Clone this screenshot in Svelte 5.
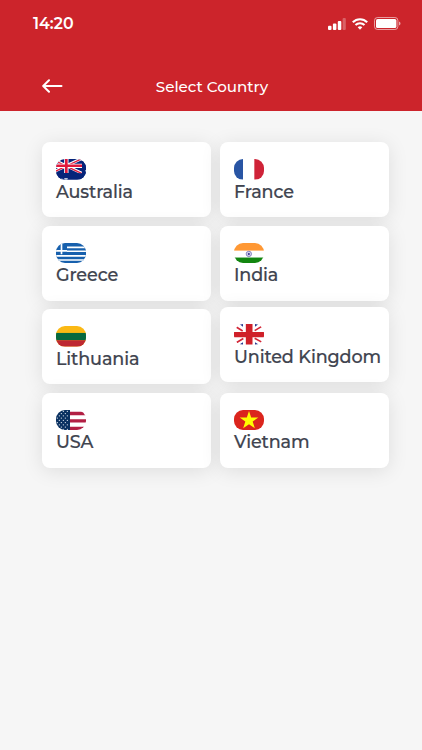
<script>
  const countries = [
    { code: 'au', name: 'Australia' },
    { code: 'fr', name: 'France' },
    { code: 'gr', name: 'Greece' },
    { code: 'in', name: 'India' },
    { code: 'lt', name: 'Lithuania' },
    { code: 'gb', name: 'United Kingdom' },
    { code: 'us', name: 'USA' },
    { code: 'vn', name: 'Vietnam' }
  ];

  const starRows = [0, 1, 2, 3, 4, 5, 6, 7, 8];
</script>

<main class="screen">
  <header>
    <div class="status-bar">
      <span class="time">14:20</span>
      <div class="status-icons">
        <svg width="18" height="12" viewBox="0 0 18 12" fill="#fff">
          <rect x="0" y="7.8" width="3.5" height="4.2" rx="1" />
          <rect x="4.9" y="5.6" width="3.5" height="6.4" rx="1" />
          <rect x="9.8" y="3" width="3.5" height="9" rx="1" />
          <rect x="14.6" y="0" width="3.2" height="12" rx="1" opacity="0.28" />
        </svg>
        <svg width="16" height="12" viewBox="0 0 16 12" fill="none" stroke="#fff" stroke-width="2.1">
          <path d="M.8 4.3C4.8.2 11.2.2 15.2 4.3" />
          <path d="M3.5 7.1c2.5-2.5 6.5-2.5 9 0" />
          <path d="M5.7 9.2c1.3-1.2 3.3-1.2 4.6 0L8 11.7z" fill="#fff" stroke="none" />
        </svg>
        <svg width="27" height="13" viewBox="0 0 27 13">
          <rect x=".5" y=".5" width="23.4" height="12" rx="3" fill="none" stroke="#fff" opacity="0.55" />
          <rect x="2" y="2" width="20.4" height="9" rx="1.6" fill="#fff" />
          <path d="M25 4.5c2 .8 2 3.2 0 4z" fill="#fff" opacity="0.6" />
        </svg>
      </div>
    </div>
    <div class="nav-bar">
      <button class="back" aria-label="Back">
        <svg width="21" height="14" viewBox="0 0 21 14" fill="none" stroke="#fff" stroke-width="2" stroke-linecap="round" stroke-linejoin="round">
          <path d="M7 1.2 1.2 7 7 12.8M1.5 7h18" />
        </svg>
      </button>
      <h1>Select Country</h1>
    </div>
  </header>

  <div class="countries">
    {#each countries as country (country.code)}
      <div class="card" class:raised={country.code === 'gb'}>
        <svg class="flag" viewBox="0 0 90 62" preserveAspectRatio="none">
          {#if country.code === 'au'}
            <rect width="90" height="62" fill="#06247a" />
            <path d="M-16-2 78 43M78-2-16 43" stroke="#fff" stroke-width="9" />
            <path d="M-16-1 78 44M78-1-16 44" stroke="#e0183c" stroke-width="4" />
            <path d="M31 0v42M0 20.5h78" stroke="#fff" stroke-width="13" />
            <path d="M31 0v42M0 20.5h78" stroke="#e0183c" stroke-width="8" />
            <path d="M78 0h12v62H0V43h78z" fill="#06247a" />
            <path d="m30 57 2 2 4-1-2 4h-8l-2-4 4 1zM16 59l3 1 3 2h-5zM87 35l3-1v5z" fill="#fff" />
          {:else if country.code === 'fr'}
            <rect width="90" height="62" fill="#fff" />
            <rect width="27" height="62" fill="#2955a4" />
            <rect x="61" width="29" height="62" fill="#cf2338" />
          {:else if country.code === 'gr'}
            <rect width="90" height="62" fill="#1760ad" />
            <path d="M33 13h57M33 25h57M0 39h90M0 51.5h90" stroke="#fff" stroke-width="5" />
            <path d="M16.5 0v34M0 24h33" stroke="#fff" stroke-width="5" />
          {:else if country.code === 'in'}
            <rect width="90" height="62" fill="#fff" />
            <rect width="90" height="23" fill="#ff9834" />
            <rect y="44" width="90" height="18" fill="#138610" />
            <circle cx="44.5" cy="33" r="8" fill="#e7e7f6" stroke="#5750a5" stroke-width="2" />
            <path d="M44.5 26v14M37.5 33h14M39.5 28l10 10M49.5 28l-10 10" stroke="#8984c3" />
            <circle cx="44.5" cy="33" r="3" fill="#38318f" />
          {:else if country.code === 'lt'}
            <rect width="90" height="62" fill="#fbb915" />
            <rect y="21" width="90" height="22" fill="#07693f" />
            <rect y="43" width="90" height="19" fill="#be2932" />
          {:else if country.code === 'gb'}
            <rect width="90" height="62" fill="#fff" />
            <path d="M16 0h11v8zM74 0H63v8zM16 62h11v-7zM74 62H63v-7z" fill="#293990" />
            <path d="m8 10 18 11M82 8 62 20M8 56l20-12M82 54 62 43" stroke="#d32636" stroke-width="5" />
            <path d="M45.5 0v62" stroke="#cf2029" stroke-width="20" />
            <path d="M0 32h90" stroke="#cf2029" stroke-width="16" />
          {:else if country.code === 'us'}
            <rect width="90" height="62" fill="#fff" />
            <path d="M41 10.5h49M41 33h49M41 56h49" stroke="#b21f44" stroke-width="10" />
            <rect width="42" height="62" fill="#0a3161" />
            {#each starRows as row}
              <g fill="#e7edf5">
                <circle cx={row % 2 ? 4 : 10} cy={4 + row * 6.8} r="1.9" />
                <circle cx={row % 2 ? 16 : 22} cy={4 + row * 6.8} r="1.9" />
                <circle cx={row % 2 ? 28 : 34} cy={4 + row * 6.8} r="1.9" />
              </g>
            {/each}
          {:else}
            <rect width="90" height="62" fill="#db251d" />
            <path d="m45 3 6.5 19.5H73L56 35l6.5 20L45 43 27.5 55 34 35 17 22.5h21.5z" fill="#ff0" />
          {/if}
        </svg>
        <span class="name">{country.name}</span>
      </div>
    {/each}
  </div>
</main>

<style>
  :global(body) {
    background: #f6f6f6;
  }

  .screen {
    min-height: 750px;
    background: #f6f6f6;
    font-family: Montserrat, Inter, sans-serif;
  }

  header {
    box-sizing: border-box;
    height: 110.5px;
    background: #cc242b;
    color: #fff;
  }

  .status-bar {
    display: flex;
    align-items: center;
    justify-content: space-between;
    height: 47px;
    padding: 0 22px 0 33px;
  }

  .time {
    font-size: 15.8px;
    font-weight: 600;
  }

  .status-icons {
    display: flex;
    align-items: center;
    gap: 6px;
    margin-right: -1px;
  }

  .nav-bar {
    display: grid;
    grid-template-columns: 42px 1fr 42px;
    align-items: center;
    margin-top: 26px;
    height: 26px;
    padding: 0 40px 0 42px;
  }

  .back {
    display: flex;
    padding: 0;
    border: 0;
    background: none;
  }

  h1 {
    margin: 0;
    font-size: 15.1px;
    font-weight: 500;
    text-align: center;
  }

  .countries {
    display: grid;
    grid-template-columns: 169.2px 169.2px;
    grid-auto-rows: 75px;
    gap: 8.6px 8.8px;
    padding: 31.5px 0 0 42px;
  }

  .card {
    box-sizing: border-box;
    display: flex;
    flex-direction: column;
    align-items: flex-start;
    padding: 17px 14px;
    border-radius: 8px;
    background: #fff;
    box-shadow: 0 3px 20px rgba(0, 0, 0, 0.1);
  }

  .raised {
    margin: -2px 0 2px;
  }

  .flag {
    flex: none;
    width: 30px;
    height: 20.5px;
    border-radius: 9px;
  }

  .name {
    color: #40444f;
    font-size: 17.6px;
    font-weight: 500;
    letter-spacing: -0.12px;
    line-height: 24.5px;
    white-space: nowrap;
    -webkit-text-stroke: 0.2px #40444f;
  }
</style>
